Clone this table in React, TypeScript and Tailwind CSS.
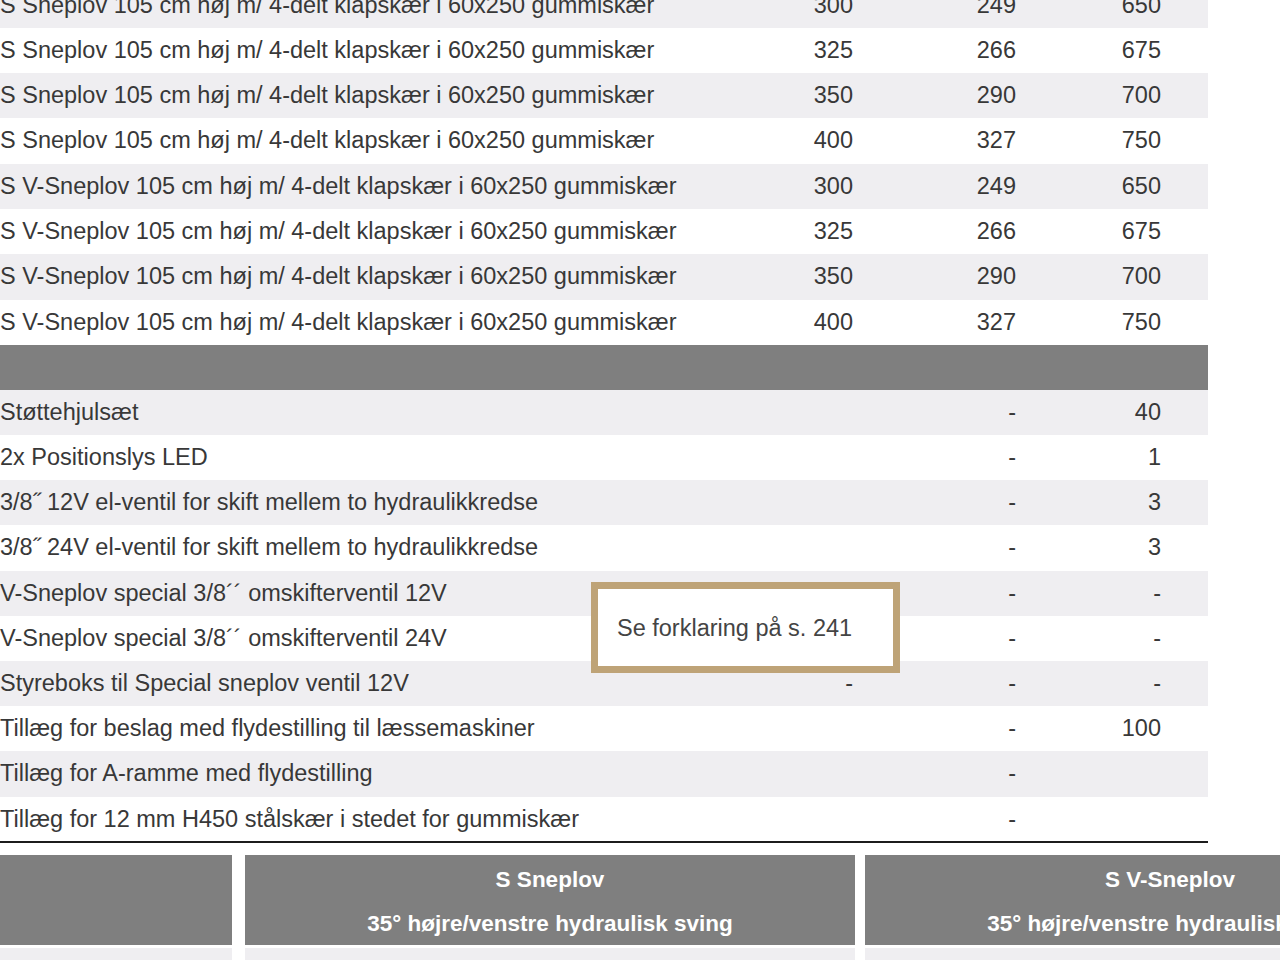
import React from "react";

type Row = { label: string; a?: string; b?: string; c?: string };

const upper: Row[] = [
  { label: "S Sneplov 105 cm høj m/ 4-delt klapskær i 60x250 gummiskær", a: "300", b: "249", c: "650" },
  { label: "S Sneplov 105 cm høj m/ 4-delt klapskær i 60x250 gummiskær", a: "325", b: "266", c: "675" },
  { label: "S Sneplov 105 cm høj m/ 4-delt klapskær i 60x250 gummiskær", a: "350", b: "290", c: "700" },
  { label: "S Sneplov 105 cm høj m/ 4-delt klapskær i 60x250 gummiskær", a: "400", b: "327", c: "750" },
  { label: "S V-Sneplov 105 cm høj m/ 4-delt klapskær i 60x250 gummiskær", a: "300", b: "249", c: "650" },
  { label: "S V-Sneplov 105 cm høj m/ 4-delt klapskær i 60x250 gummiskær", a: "325", b: "266", c: "675" },
  { label: "S V-Sneplov 105 cm høj m/ 4-delt klapskær i 60x250 gummiskær", a: "350", b: "290", c: "700" },
  { label: "S V-Sneplov 105 cm høj m/ 4-delt klapskær i 60x250 gummiskær", a: "400", b: "327", c: "750" },
];

const lower: Row[] = [
  { label: "Støttehjulsæt", b: "-", c: "40" },
  { label: "2x Positionslys LED", b: "-", c: "1" },
  { label: "3/8˝ 12V el-ventil for skift mellem to hydraulikkredse", b: "-", c: "3" },
  { label: "3/8˝ 24V el-ventil for skift mellem to hydraulikkredse", b: "-", c: "3" },
  { label: "V-Sneplov special 3/8´´ omskifterventil 12V", b: "-", c: "-" },
  { label: "V-Sneplov special 3/8´´ omskifterventil 24V", b: "-", c: "-" },
  { label: "Styreboks til Special sneplov ventil 12V", a: "-", b: "-", c: "-" },
  { label: "Tillæg for beslag med flydestilling til læssemaskiner", b: "-", c: "100" },
  { label: "Tillæg for A-ramme med flydestilling", b: "-" },
  { label: "Tillæg for 12 mm H450 stålskær i stedet for gummiskær", b: "-" },
];

function TableRow({ row, grey, upperRow }: { row: Row; grey: boolean; upperRow: boolean }) {
  return (
    <div
      className={
        "grid grid-cols-[760px_93px_163px_145px_47px] items-center " +
        (upperRow ? "h-[45.3px] " : "h-[45.2px] ") +
        (grey ? "bg-[#efeef1]" : "bg-white")
      }
    >
      <div className="whitespace-nowrap">{row.label}</div>
      <div className="text-right">{row.a ?? ""}</div>
      <div className="text-right">{row.b ?? ""}</div>
      <div className="text-right">{row.c ?? ""}</div>
      <div />
    </div>
  );
}

export default function App() {
  return (
    <div className="relative w-[1280px] h-[960px] overflow-hidden bg-white font-['Liberation_Sans',Arial,sans-serif] text-[23.5px] text-[#383838]">
      <div className="w-[1208px] mt-[-17.5px]">
        {upper.map((r, i) => (
          <TableRow key={"u" + i} row={r} grey={i % 2 === 0} upperRow />
        ))}
        <div className="h-[45px] bg-[#7f7f7f]" />
        {lower.map((r, i) => (
          <TableRow key={"l" + i} row={r} grey={i % 2 === 0} upperRow={false} />
        ))}
        <div className="h-[2px] bg-[#1c1c1c] mt-[-1px] relative" />
      </div>

      <div className="mt-[12px] flex gap-[13px] w-[1500px]">
        <div className="w-[232px] shrink-0 flex flex-col gap-[3px]">
          <div className="h-[90px] bg-[#7f7f7f]" />
          <div className="h-[45px] bg-[#efeef1]" />
        </div>
        <div className="w-[610px] shrink-0 flex flex-col gap-[3px]">
          <div className="h-[90px] bg-[#7f7f7f] pt-[3px] text-white font-bold text-[22.5px] text-center leading-[44px]">
            <div>S Sneplov</div>
            <div>35° højre/venstre hydraulisk sving</div>
          </div>
          <div className="h-[45px] bg-[#efeef1]" />
        </div>
        <div className="w-[610px] shrink-0 flex flex-col gap-[3px] ml-[-3px]">
          <div className="h-[90px] bg-[#7f7f7f] pt-[3px] text-white font-bold text-[22.5px] text-center leading-[44px]">
            <div>S V-Sneplov</div>
            <div>35° højre/venstre hydraulisk sving</div>
          </div>
          <div className="h-[45px] bg-[#efeef1]" />
        </div>
      </div>

      <div className="absolute left-[591px] top-[582px] w-[309px] h-[91px] border-[7px] border-[#bea377] bg-white flex items-center pl-[19px] pt-[3px] text-[23.5px] text-[#444]">
        Se forklaring på s. 241
      </div>
    </div>
  );
}
